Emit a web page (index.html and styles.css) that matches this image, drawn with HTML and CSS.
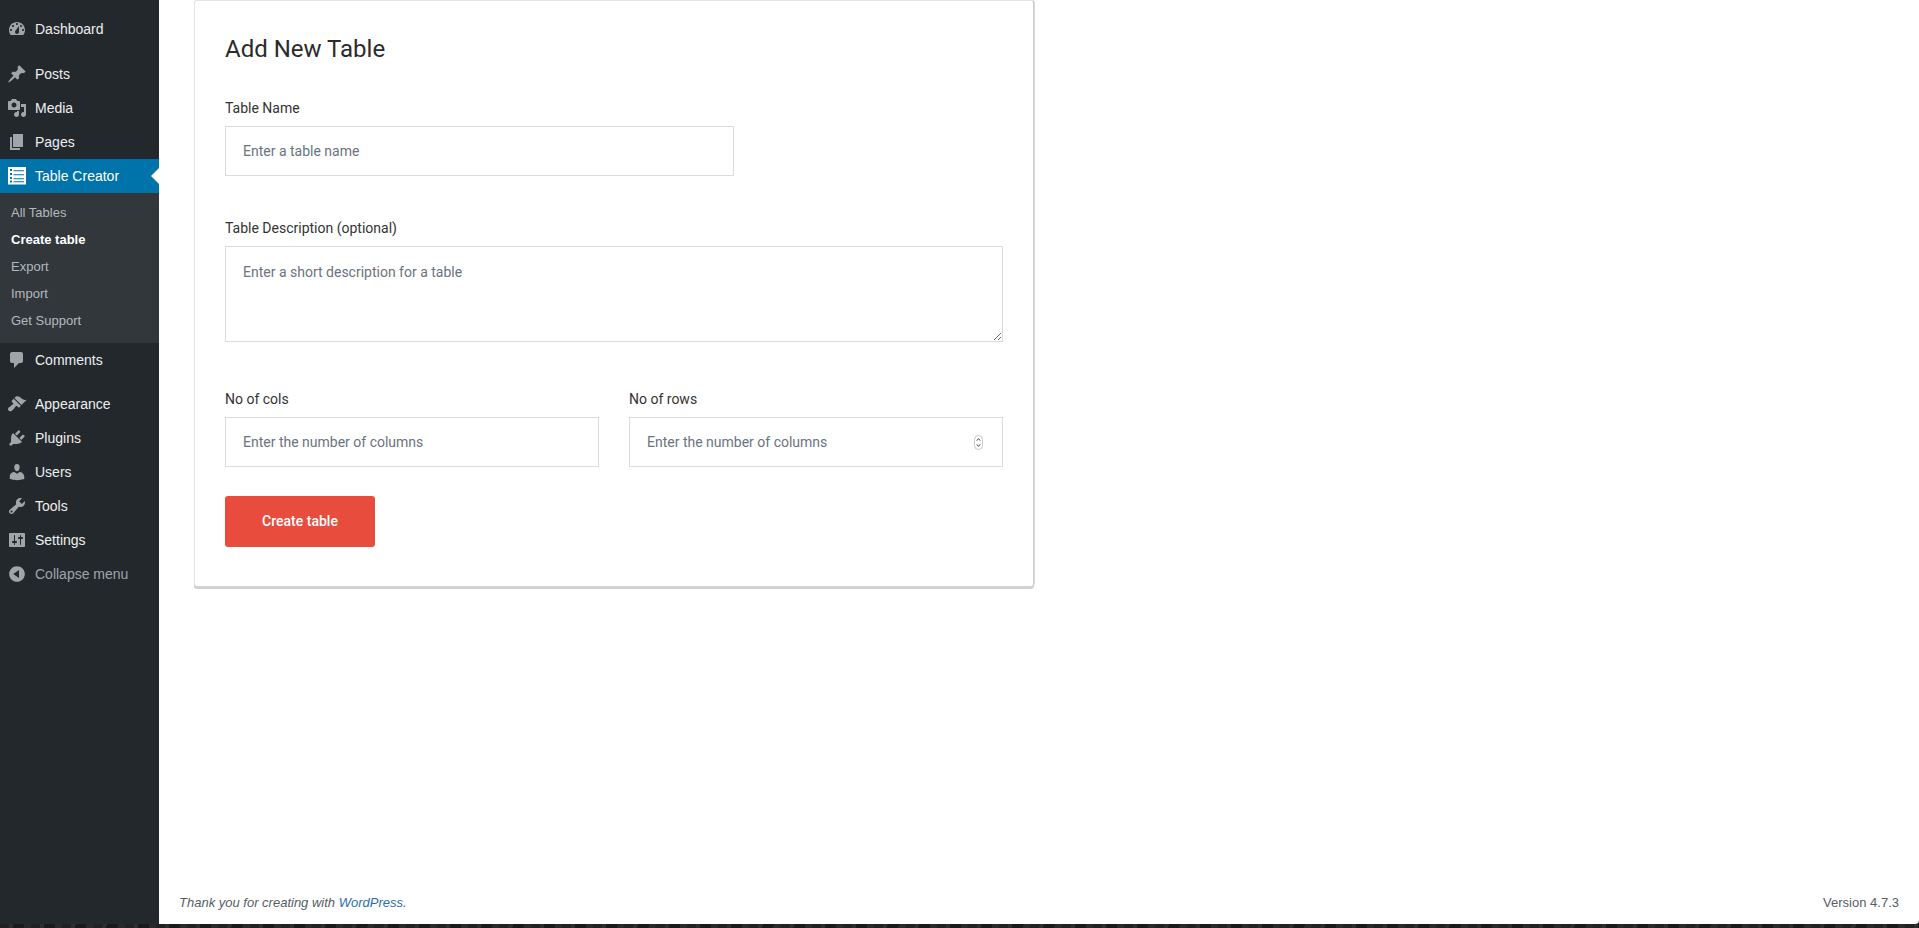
FILE: index.html
```html
<!DOCTYPE html>
<html lang="en">
<head>
<meta charset="utf-8">
<title>Add New Table</title>
<link rel="stylesheet" href="styles.css">
</head>
<body>
<div class="window">
  <nav class="sidebar">
    <ul class="menu">
      <li class="item"><svg class="icon" viewBox="0 0 20 20"><path fill-rule="evenodd" d="M3.76 16h12.48c1.1-1.37 1.76-3.11 1.76-5 0-4.42-3.58-8-8-8s-8 3.58-8 8c0 1.89.66 3.63 1.76 5zM10 4c.55 0 1 .45 1 1s-.45 1-1 1-1-.45-1-1 .45-1 1-1zM6 6c.55 0 1 .45 1 1s-.45 1-1 1-1-.45-1-1 .45-1 1-1zm8 0c.55 0 1 .45 1 1s-.45 1-1 1-1-.45-1-1 .45-1 1-1zm-5.37 5.55L12 7v6c0 1.1-.9 2-2 2s-2-.9-2-2c0-.57.24-1.08.63-1.45zM4 10c.55 0 1 .45 1 1s-.45 1-1 1-1-.45-1-1 .45-1 1-1zm12 0c.55 0 1 .45 1 1s-.45 1-1 1-1-.45-1-1 .45-1 1-1z"/></svg><span>Dashboard</span></li>
      <li class="item group-start"><svg class="icon" viewBox="0 0 20 20"><path d="M10.44 3.02l1.82-1.82 6.36 6.35-1.83 1.82c-1.05-.68-2.48-.57-3.41.36l-.75.75c-.92.93-1.04 2.35-.35 3.41l-1.83 1.82-2.41-2.41-2.8 2.79c-.42.42-3.38 2.71-3.8 2.29s1.86-3.39 2.28-3.81l2.79-2.79L4.1 9.36l1.83-1.82c1.05.69 2.48.57 3.4-.36l.75-.75c.93-.92 1.05-2.35.36-3.41z"/></svg><span>Posts</span></li>
      <li class="item"><svg class="icon" viewBox="0 0 20 20"><path fill-rule="evenodd" d="M13 11V4c0-.55-.45-1-1-1h-1.67L9 1H5L3.67 3H2c-.55 0-1 .45-1 1v7c0 .55.45 1 1 1h10c.55 0 1-.45 1-1zM7 4.5c1.38 0 2.5 1.12 2.5 2.5S8.38 9.5 7 9.5 4.5 8.38 4.5 7 5.62 4.5 7 4.5zM14 6h5v10.5c0 1.38-1.12 2.5-2.5 2.5S14 17.88 14 16.5s1.12-2.5 2.5-2.5c.17 0 .34.02.5.05V9h-3V6zm-4 8.05V13h2v3.5c0 1.38-1.12 2.5-2.5 2.5S7 17.88 7 16.5 8.12 14 9.5 14c.17 0 .34.02.5.05z"/></svg><span>Media</span></li>
      <li class="item"><svg class="icon" viewBox="0 0 20 20"><path d="M6 15V2h10v13H6zm-1 1h8v2H3V5h2v11z"/></svg><span>Pages</span></li>
      <li class="item active"><svg class="icon" viewBox="0 0 20 20"><path fill-rule="evenodd" d="M1 1h18v17.5H1zM3 3v2h2V3zM6.5 4.2v1h10.5v-1zM3 7v2h2V7zM6.5 8.2v1h10.5v-1zM3 11v2h2v-2zM6.5 12.2v1h10.5v-1zM3 14.5v2h2v-2zM6.5 15.2v1h10.5v-1z"/></svg><span>Table Creator</span></li>
      <li>
        <ul class="submenu">
          <li>All Tables</li>
          <li class="current">Create table</li>
          <li>Export</li>
          <li>Import</li>
          <li>Get Support</li>
        </ul>
      </li>
      <li class="item"><svg class="icon" viewBox="0 0 20 20"><path d="M5 2h9c1.1 0 2 .9 2 2v7c0 1.1-.9 2-2 2h-2l-5 5v-5H5c-1.1 0-2-.9-2-2V4c0-1.1.9-2 2-2z"/></svg><span>Comments</span></li>
      <li class="item group-start-alt"><svg class="icon" viewBox="0 0 20 20"><path d="M14.48 11.06L7.41 3.99l1.5-1.5c.5-.56 2.3-.47 3.51.32 1.21.8 1.43 1.28 2.91 2.1 1.18.64 2.45 1.26 4.45.85zm-.71.71L6.7 4.7 4.93 6.47c-.39.39-.39 1.02 0 1.41l1.06 1.06c.39.39.39 1.03 0 1.42-.6.6-1.43 1.11-2.21 1.69-.35.26-.7.53-1.01.84C1.43 13.23 1 14.06 1 15.29c0 1.04.84 1.88 1.88 1.88 1.23 0 2.06-.43 3.4-1.77.31-.31.58-.66.84-1.01.58-.78 1.09-1.61 1.69-2.21.39-.39 1.03-.39 1.42 0l1.06 1.06c.39.39 1.02.39 1.41 0z"/></svg><span>Appearance</span></li>
      <li class="item"><svg class="icon" viewBox="0 0 20 20"><path d="M13.11 4.36L9.87 7.6 8 5.73l3.24-3.24c.35-.34 1.05-.2 1.56.32.52.51.66 1.21.31 1.55zm-8 1.77l.91-1.12 9.01 9.01-1.19.84c-.71.71-2.63 1.16-3.82 1.16H6.14L4.9 17.26c-.59.59-1.54.59-2.12 0-.59-.58-.59-1.53 0-2.12l1.24-1.24v-3.88c0-1.13.4-3.19 1.09-3.89zm7.26 3.97l3.24-3.24c.34-.35 1.04-.21 1.55.31.52.51.66 1.21.31 1.55l-3.24 3.25z"/></svg><span>Plugins</span></li>
      <li class="item"><svg class="icon" viewBox="0 0 20 20"><path d="M10 9.25c-2.27 0-2.73-3.44-2.73-3.44C7 4.02 7.82 2 9.97 2c2.16 0 2.98 2.02 2.71 3.81 0 0-.41 3.44-2.68 3.44zm0 2.57L12.72 10c2.39 0 4.52 2.33 4.52 4.53v2.49s-3.65 1.13-7.24 1.13c-3.65 0-7.24-1.13-7.24-1.13v-2.49c0-2.25 1.94-4.48 4.47-4.48z"/></svg><span>Users</span></li>
      <li class="item"><svg class="icon" viewBox="0 0 20 20"><path fill-rule="evenodd" d="M16.68 9.77c-1.34 1.34-3.3 1.67-4.95.99l-5.41 6.52c-.99.99-2.59.99-3.58 0s-.99-2.59 0-3.57l6.52-5.42c-.68-1.65-.35-3.61.99-4.95 1.28-1.28 3.12-1.62 4.72-1.06l-2.89 2.89 2.82 2.82 2.86-2.87c.53 1.58.18 3.39-1.08 4.65zM3.81 16.21c.4.39 1.04.39 1.43 0 .4-.4.4-1.04 0-1.43-.39-.4-1.03-.4-1.43 0-.39.39-.39 1.03 0 1.43z"/></svg><span>Tools</span></li>
      <li class="item"><svg class="icon" viewBox="0 0 20 20"><path fill-rule="evenodd" d="M18 16V4c0-.55-.45-1-1-1H3c-.55 0-1 .45-1 1v12c0 .55.45 1 1 1h14c.55 0 1-.45 1-1zM8 11h1c.55 0 1 .45 1 1s-.45 1-1 1H8v1.5c0 .28-.22.5-.5.5s-.5-.22-.5-.5V13H6c-.55 0-1-.45-1-1s.45-1 1-1h1V5.5c0-.28.22-.5.5-.5s.5.22.5.5V11zm5-2h-1c-.55 0-1-.45-1-1s.45-1 1-1h1V5.5c0-.28.22-.5.5-.5s.5.22.5.5V7h1c.55 0 1 .45 1 1s-.45 1-1 1h-1v5.5c0 .28-.22.5-.5.5s-.5-.22-.5-.5V9z"/></svg><span>Settings</span></li>
      <li class="item collapse"><svg class="icon" viewBox="0 0 20 20"><path fill-rule="evenodd" d="M10 2.16c4.33 0 7.84 3.51 7.84 7.84s-3.51 7.84-7.84 7.84S2.16 14.33 2.16 10 5.71 2.16 10 2.16zm2 11.72V6.12L6.18 9.97z"/></svg><span>Collapse menu</span></li>
    </ul>
  </nav>
  <main class="content">
    <form class="card">
      <h1 class="title">Add New Table</h1>
      <div class="field name-field">
        <label class="label" for="tname">Table Name</label>
        <input class="control" id="tname" type="text" placeholder="Enter a table name">
      </div>
      <div class="field desc-field">
        <label class="label" for="tdesc">Table Description (optional)</label>
        <textarea class="control area" id="tdesc" placeholder="Enter a short description for a table"></textarea>
      </div>
      <div class="cols">
        <div class="field">
          <label class="label" for="tcols">No of cols</label>
          <input class="control" id="tcols" type="text" placeholder="Enter the number of columns">
        </div>
        <div class="field">
          <label class="label" for="trows">No of rows</label>
          <div class="spin-wrap">
            <input class="control number" id="trows" type="number" placeholder="Enter the number of columns">
            <svg class="spinner" viewBox="0 0 9 15"><rect x=".5" y=".5" width="8" height="14" rx="4" fill="#fff" stroke="#c8c8c8"/><path d="M2.8 5.6L4.5 3.6l1.7 2M2.8 9.4l1.7 2 1.7-2" fill="none" stroke="#444" stroke-width="1"/></svg>
          </div>
        </div>
      </div>
      <button class="submit" type="button">Create table</button>
    </form>
    <footer class="footer">
      <em>Thank you for creating with <a href="#">WordPress</a>.</em>
      <span>Version 4.7.3</span>
    </footer>
  </main>
</div>
<div class="desktop"></div>
</body>
</html>
```
FILE: styles.css
```css
* { box-sizing: border-box; }
html, body { margin: 0; height: 928px; overflow: hidden; background: #1c1c1e; }
body { display: flex; flex-direction: column; font-family: "Liberation Sans", Arial, sans-serif; }
ul { list-style: none; margin: 0; padding: 0; }

.window { display: flex; height: 924px; flex: none; background: #fff; border-bottom-right-radius: 4px; overflow: hidden; }
.desktop { flex: 1; background: repeating-linear-gradient(97deg, #222224 0 9px, #2e2e30 9px 13px, #1a1a1c 13px 24px, #2a2a2c 24px 31px); }

.sidebar { width: 159px; flex: none; background: #23282d; padding-top: 12px; }
.item { position: relative; display: flex; align-items: center; height: 34px; padding-left: 7px; color: #eee; font-size: 14px; }
.item span { margin-left: 8px; }
.icon { width: 20px; height: 20px; flex: none; fill: #a0a5aa; }
.group-start { margin-top: 11px; }
.group-start-alt { margin-top: 10px; }
.active { background: #0073aa; color: #fff; }
.active .icon { fill: #fff; }
.active::after { content: ""; position: absolute; right: 0; top: 50%; margin-top: -8px; border: 8px solid transparent; border-right-color: #fff; border-left-width: 0; }
.collapse { color: #a0a5aa; }
.submenu { background: #32373c; padding: 6px 0 9px; height: 150px; }
.submenu li { height: 27px; line-height: 27px; padding-left: 11px; font-size: 13px; color: #b4b9be; }
.submenu .current { color: #fff; font-weight: 700; }

.content { flex: 1; min-width: 0; display: flex; flex-direction: column; justify-content: space-between; padding: 0 20px 0 35px; }
.card { width: 840px; height: 586px; padding: 32px 30px 0; background: #fff; border: 1px solid #e4e4e4; border-right-color: #cfcfcf; border-bottom: 0; border-radius: 3px; box-shadow: 0 3px 0 #d2d2d2, 1px 0 0 #d8d8d8; font-family: Roboto, Arial, sans-serif; }
.title { margin: 0 0 33px; font-size: 24px; line-height: 32px; font-weight: 400; color: #2b2b2b; }
.field { display: flex; flex-direction: column; }
.name-field { width: 509px; margin-bottom: 42px; }
.desc-field { margin-bottom: 47px; }
.label { margin-bottom: 8px; font-size: 14px; line-height: 20px; color: #333; }
.control { display: block; width: 100%; height: 50px; padding: 0 17px 1px; border: 1px solid #dcdcdc; border-radius: 0; background: #fff; font-family: Roboto, Arial, sans-serif; font-size: 14px; color: #333; outline: 0; }
.control::placeholder { color: #6b7380; opacity: 1; }
.area { height: 96px; padding: 15px 17px; line-height: 20px; resize: vertical; }
.cols { display: grid; grid-template-columns: 1fr 1fr; gap: 30px; }
.spin-wrap { position: relative; }
.number { appearance: textfield; -moz-appearance: textfield; }
.number::-webkit-inner-spin-button, .number::-webkit-outer-spin-button { -webkit-appearance: none; margin: 0; }
.spinner { position: absolute; right: 20px; top: 18px; width: 9px; height: 15px; }
.submit { display: block; width: 150px; height: 51px; margin-top: 29px; padding: 0 0 1px; border: 0; border-radius: 3px; background: #e74c3c; color: #fff; font-family: Roboto, Arial, sans-serif; font-size: 14px; font-weight: 500; }

.footer { display: flex; justify-content: space-between; height: 31px; margin-left: -15px; font-size: 13px; line-height: 20px; color: #555d66; }
.footer a { color: #2a6db0; text-decoration: none; }
```
